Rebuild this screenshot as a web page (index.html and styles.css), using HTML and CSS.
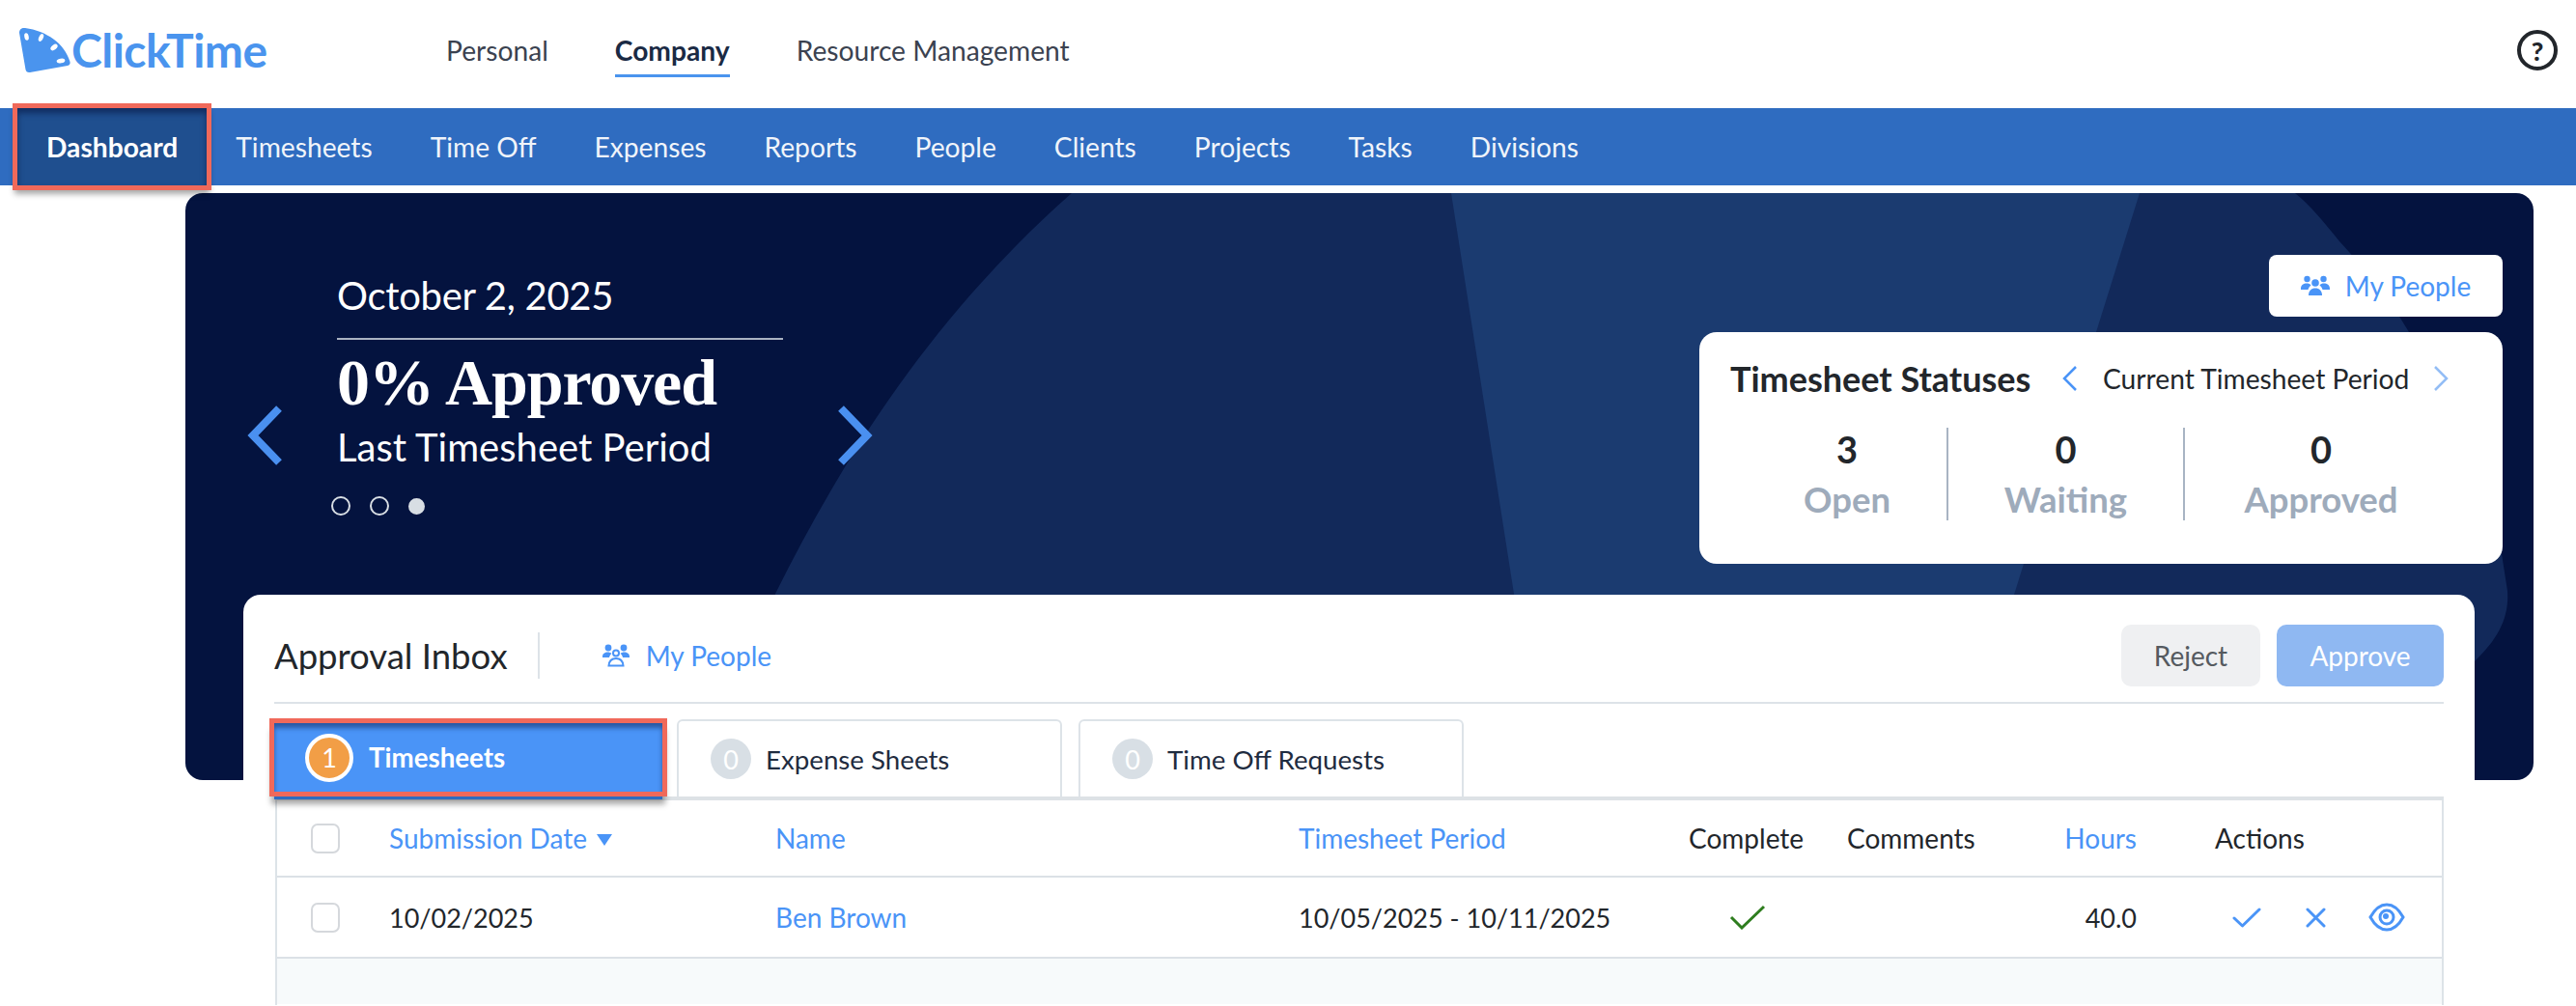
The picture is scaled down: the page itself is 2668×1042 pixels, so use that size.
FILE: index.html
```html
<!DOCTYPE html>
<html lang="en">
<head>
<meta charset="utf-8">
<title>ClickTime Dashboard</title>
<link rel="stylesheet" href="styles.css">
</head>
<body>
<header class="topbar">
  <a class="logo">
    <svg class="logo-mark" width="54" height="48" viewBox="0 0 54 48">
      <path d="M1 6C1 2.500 3.500 0.500 7 1C29 4 48 17 53.500 36C54 38 53 39.500 51 40L12 47C9.500 47.500 8 46 7.500 44L1 6Z" fill="#4a94ee"/>
      <ellipse cx="8.500" cy="10" rx="2.200" ry="3.800" transform="rotate(-12 8.500 10)" fill="#fff"/>
      <ellipse cx="23.500" cy="11" rx="2.200" ry="4.200" transform="rotate(25 23.500 11)" fill="#fff"/>
      <ellipse cx="37" cy="21" rx="2.400" ry="4.200" transform="rotate(52 37 21)" fill="#fff"/>
      <ellipse cx="44" cy="35" rx="2.400" ry="4.400" transform="rotate(80 44 35)" fill="#fff"/>
    </svg>
    <span class="logo-text">ClickTime</span>
  </a>
  <nav class="mainnav">
    <a class="mainnav-item">Personal</a>
    <a class="mainnav-item is-active">Company</a>
    <a class="mainnav-item">Resource Management</a>
  </nav>
  <span class="help">?</span>
</header>

<nav class="subnav">
  <a class="subnav-item is-active">Dashboard</a>
  <a class="subnav-item">Timesheets</a>
  <a class="subnav-item">Time Off</a>
  <a class="subnav-item">Expenses</a>
  <a class="subnav-item">Reports</a>
  <a class="subnav-item">People</a>
  <a class="subnav-item">Clients</a>
  <a class="subnav-item">Projects</a>
  <a class="subnav-item">Tasks</a>
  <a class="subnav-item">Divisions</a>
</nav>

<main class="content">
  <section class="hero">
    <svg class="hero-bg" viewBox="0 0 2432 608" width="2432" height="608" aria-hidden="true">
      <path d="M918 0C771 130 681 275 611 415C595 470 583 530 570 608L2200 608L2371 485C2395 462 2407 440 2405 412C2400 380 2396 350 2388 322C2360 240 2320 170 2288 120C2270 95 2250 70 2231 50C2215 30 2200 12 2185 0Z" fill="#12295a"/>
      <path d="M1311 0L1376 415L1390 608L1834 608L2024 0Z" fill="#1b3b70"/>
    </svg>
    <div class="carousel">
      <svg class="chevron" width="38" height="62" viewBox="0 0 38 62"><path d="M33 3L6 31L33 59" fill="none" stroke="#4a90f0" stroke-width="8"/></svg>
      <div class="slide">
        <div class="slide-date">October 2, 2025</div>
        <div class="slide-value">0% Approved</div>
        <div class="slide-label">Last Timesheet Period</div>
        <div class="dots"><span class="dot"></span><span class="dot"></span><span class="dot is-on"></span></div>
      </div>
      <svg class="chevron" width="38" height="62" viewBox="0 0 38 62"><path d="M5 3L32 31L5 59" fill="none" stroke="#4a90f0" stroke-width="8"/></svg>
    </div>
    <div class="hero-side">
      <a class="people-btn">
        <svg width="30" height="22" viewBox="0 0 30 22" fill="#4a94f7"><circle cx="6.500" cy="4" r="3.200"/><circle cx="23.500" cy="4" r="3.200"/><circle cx="15" cy="8" r="3.800"/><path d="M0 14C0 10 3 8.500 6 8.500C8 8.500 9.500 9 10.500 10.500C9 12 8 13 7.500 15H0Z"/><path d="M30 14C30 10 27 8.500 24 8.500C22 8.500 20.500 9 19.500 10.500C21 12 22 13 22.500 15H30Z"/><path d="M8 21C8 16 11 13.500 15 13.500C19 13.500 22 16 22 21Z"/></svg>
        My People
      </a>
      <div class="status-card">
        <div class="status-head">
          <span class="status-title">Timesheet Statuses</span>
          <svg class="status-chev" width="18" height="28" viewBox="0 0 18 28"><path d="M15 2L3 14L15 26" fill="none" stroke="#4a94f7" stroke-width="2.500"/></svg>
          <span class="status-period">Current Timesheet Period</span>
          <svg class="status-chev" width="18" height="28" viewBox="0 0 18 28"><path d="M3 2L15 14L3 26" fill="none" stroke="#93bdf5" stroke-width="2.500"/></svg>
        </div>
        <div class="status-cols">
          <div class="status-col is-open"><b>3</b><span>Open</span></div>
          <div class="status-col is-waiting"><b>0</b><span>Waiting</span></div>
          <div class="status-col is-approved"><b>0</b><span>Approved</span></div>
        </div>
      </div>
    </div>
  </section>

  <section class="inbox">
    <div class="inbox-head">
      <h2 class="inbox-title">Approval Inbox</h2>
      <a class="inbox-people">
        <svg width="28" height="24" viewBox="0 0 28 24" fill="none" stroke="#4a94f7" stroke-width="2"><circle cx="6" cy="4" r="3.400" fill="#4a94f7" stroke="none"/><circle cx="22" cy="4" r="3.400" fill="#4a94f7" stroke="none"/><path d="M0 13C0 10 2.500 8.500 5.500 8.500C7 8.500 8.500 9 9.500 10C8 11 7.500 12 7 14H0Z" fill="#4a94f7" stroke="none"/><path d="M28 13C28 10 25.500 8.500 22.500 8.500C21 8.500 19.500 9 18.500 10C20 11 20.500 12 21 14H28Z" fill="#4a94f7" stroke="none"/><circle cx="14" cy="9.500" r="3"/><path d="M6.500 22.500C7 17 10 15 14 15C18 15 21 17 21.500 22.500Z"/></svg>
        My People
      </a>
      <div class="inbox-actions">
        <button class="btn btn-reject">Reject</button>
        <button class="btn btn-approve">Approve</button>
      </div>
    </div>
    <div class="tabs">
      <a class="tab is-active"><span class="badge">1</span>Timesheets</a>
      <a class="tab"><span class="badge">0</span>Expense Sheets</a>
      <a class="tab"><span class="badge">0</span>Time Off Requests</a>
    </div>
    <div class="table">
      <div class="row row-head">
        <span class="check"></span>
        <span class="link">Submission Date <i class="caret"></i></span>
        <span class="link">Name</span>
        <span class="link">Timesheet Period</span>
        <span>Complete</span>
        <span>Comments</span>
        <span class="link num">Hours</span>
        <span class="cell-actions">Actions</span>
      </div>
      <div class="row">
        <span class="check"></span>
        <span class="digits">10/02/2025</span>
        <span class="link">Ben Brown</span>
        <span class="digits">10/05/2025 - 10/11/2025</span>
        <span class="cell-complete"><svg width="38" height="26" viewBox="0 0 38 26"><path d="M2 13L13 24L36 2" fill="none" stroke="#2e7d1e" stroke-width="3"/></svg></span>
        <span></span>
        <span class="num digits">40.0</span>
        <span class="cell-actions row-actions">
          <svg width="30" height="21" viewBox="0 0 30 21"><path d="M2 11L10.500 19L28 2" fill="none" stroke="#4a94f7" stroke-width="3" stroke-linecap="round" stroke-linejoin="round"/></svg>
          <svg width="21" height="21" viewBox="0 0 21 21"><path d="M2 2L19 19M19 2L2 19" fill="none" stroke="#4a94f7" stroke-width="3" stroke-linecap="round"/></svg>
          <svg width="38" height="30" viewBox="0 0 38 30"><path d="M2 15C7 6 12 2 19 2C26 2 31 6 36 15C31 24 26 28 19 28C12 28 7 24 2 15Z" fill="none" stroke="#4a94f7" stroke-width="3"/><circle cx="19" cy="15" r="7" fill="none" stroke="#4a94f7" stroke-width="3"/><circle cx="18" cy="14" r="3" fill="#4a94f7"/></svg>
        </span>
      </div>
      <div class="table-fill"></div>
    </div>
  </section>
</main>
</body>
</html>
```

FILE: styles.css
```css
* { box-sizing: border-box; }
html, body { margin: 0; height: 1042px; overflow: hidden; background: #fff; }
body { font-family: Lato, "Open Sans", sans-serif; font-size: 28px; color: #22262b; }
a { text-decoration: none; color: inherit; }

/* top bar */
.topbar { height: 112px; display: flex; align-items: center; padding: 0 19px; position: relative; }
.logo { display: flex; align-items: flex-start; width: 443px; height: 112px; padding-top: 28px; }
.logo-mark { display: block; }
.logo-text { font-size: 48px; line-height: 46px; font-weight: 700; color: #4a94ee; letter-spacing: -0.5px; margin-left: 1px; margin-top: 1px; }
.mainnav { display: flex; gap: 69px; height: 100%; align-items: center; }
.mainnav-item { font-size: 28.200px; color: #3b4250; height: 112px; line-height: 104px; position: relative; }
.mainnav-item.is-active { font-weight: 700; color: #1a2a44; }
.mainnav-item.is-active::after { content: ""; position: absolute; left: 0; right: 0; top: 77px; height: 3px; background: #4a94ee; }
.help { margin-left: auto; margin-bottom: 8px; width: 42px; height: 42px; border: 4px solid #22262b; border-radius: 50%; display: flex; align-items: center; justify-content: center; font-size: 27px; font-weight: 900; color: #22262b; }

/* sub nav */
.subnav { height: 80px; background: #2f6cc0; display: flex; padding-left: 18px; }
.subnav-item { padding: 0 30px; line-height: 80px; color: #f0f4fa; font-size: 28.200px; position: relative; }
.subnav-item.is-active { background: #1f4f8f; font-weight: 700; color: #fff; outline: 5px solid #f0695a; box-shadow: inset 0 5px 6px rgba(0, 10, 50, 0.5), 0 6px 6px 3px rgba(0, 0, 0, 0.35); z-index: 2; }

/* hero */
.content { padding: 8px 44px 0 192px; }
.hero { height: 608px; background: #04133f; border-radius: 18px; position: relative; overflow: hidden; display: flex; justify-content: space-between; padding: 0 32px 0 64px; }
.hero-bg { position: absolute; left: 0; top: 0; }
.carousel { display: flex; align-items: flex-start; gap: 55px; position: relative; }
.chevron { margin-top: 220px; flex: none; }
.slide { width: 462px; color: #fff; padding-top: 82px; }
.slide-date { font-size: 40px; line-height: 48px; padding-bottom: 20px; border-bottom: 2px solid #aab2c2; letter-spacing: -0.3px; }
.slide-value { font-family: "Liberation Serif", serif; font-weight: 700; font-size: 68px; line-height: 76px; margin-top: 6px; letter-spacing: -1.100px; }
.slide-label { font-size: 40px; line-height: 46px; margin-top: 6px; }
.dots { display: flex; align-items: center; gap: 20px; margin-top: 28px; margin-left: -6px; }
.dot { width: 20px; height: 20px; border: 2px solid #d8dee4; border-radius: 50%; }
.dot.is-on { width: 17px; height: 17px; background: #d8dee4; }

.hero-side { position: relative; padding-top: 64px; display: flex; flex-direction: column; align-items: flex-end; gap: 16px; }
.people-btn { width: 242px; height: 64px; background: #fff; border-radius: 8px; display: flex; align-items: center; justify-content: center; gap: 16px; color: #4a94f7; font-size: 28px; }
.status-card { width: 832px; height: 240px; background: #fff; border-radius: 18px; padding: 26px 32px; }
.status-head { display: flex; align-items: center; height: 44px; }
.status-title { font-size: 36px; font-weight: 700; color: #22262b; width: 343px; }
.status-period { font-size: 28.200px; margin: 0 24px 0 25px; }
.status-chev { flex: none; }
.status-cols { display: flex; margin-top: 29px; height: 96px; }
.status-col { display: flex; flex-direction: column; align-items: center; }
.status-col b { font-size: 38px; line-height: 44px; font-weight: 700; }
.status-col span { font-size: 36.500px; line-height: 44px; font-weight: 700; color: #9eabbb; margin-top: 8px; }
.status-col.is-open { width: 226px; padding-left: 18px; border-right: 2px solid #a8b4c3; }
.status-col.is-waiting { width: 245px; border-right: 2px solid #a8b4c3; }
.status-col.is-approved { width: 282px; }

/* inbox */
.inbox { position: relative; margin: -192px 61px 0 60px; background: #fff; border-radius: 18px 18px 0 0; padding: 32px 32px 0; height: 426px; }
.inbox-head { display: flex; align-items: center; height: 81px; border-bottom: 2px solid #dde3e8; padding-bottom: 17px; }
.inbox-title { margin: 0; font-size: 36.500px; font-weight: 400; color: #22262b; height: 48px; line-height: 48px; padding-right: 31px; border-right: 2px solid #dde3e8; }
.inbox-people { display: flex; align-items: center; gap: 17px; margin-left: 65px; color: #4a94f7; font-size: 28px; }
.inbox-actions { margin-left: auto; display: flex; gap: 17px; }
.btn { height: 64px; border: 0; border-radius: 10px; font-family: inherit; font-size: 28px; }
.btn-reject { width: 144px; background: #eff0f2; color: #555a60; }
.btn-approve { width: 173px; background: #8fb8f2; color: #fff; }

.tabs { display: flex; gap: 17px; height: 80px; margin-top: 16px; align-items: flex-end; }
.tab { width: 399px; height: 80px; border: 2px solid #dde3e8; border-bottom: 0; border-radius: 6px 6px 0 0; display: flex; align-items: center; padding-left: 33px; gap: 15px; color: #1f2c40; font-size: 27.700px; background: #fff; }
.tab .badge { width: 42px; height: 42px; border-radius: 50%; background: #d8dfe5; color: #fff; display: flex; align-items: center; justify-content: center; font-size: 27px; }
.tab.is-active { width: 402px; height: 71px; margin-bottom: 5px; margin-right: -2px; background: #4a94f7; color: #fff; font-weight: 700; border: 0; border-radius: 0; padding-left: 32px; gap: 16px; outline: 5px solid #f0695a; position: relative; z-index: 2; box-shadow: inset 0 5px 5px rgba(10, 30, 80, 0.5), 0 8px 0 0 #2f6cc0, 0 10px 6px 3px rgba(0, 0, 0, 0.35); }
.tab.is-active .badge { width: 50px; height: 50px; background: #f29e46; border: 4px solid #fff; font-weight: 400; }

.table { border-top: 4px solid #dde2e6; border-left: 2px solid #dde3e8; border-right: 2px solid #dde3e8; margin-left: 1px; height: 216px; }
.row { display: grid; grid-template-columns: 116px 400px 542px 404px 164px 151px 149px 1fr; height: 84px; align-items: center; border-bottom: 2px solid #dbe1e6; }
.row .check { width: 30px; height: 31px; border: 2px solid #d5d8dc; border-radius: 7px; margin-left: 35px; }
.row-head { height: 80px; }
.link { color: #4a94f7; }
.digits { font-size: 27px; }
.num { text-align: right; }
.caret { display: inline-block; width: 0; height: 0; border-left: 8px solid transparent; border-right: 8px solid transparent; border-top: 12px solid #4a94f7; margin-left: 3px; vertical-align: 3px; }
.cell-actions { padding-left: 81px; }
.row-actions { display: flex; align-items: center; padding-left: 99px; gap: 46px; }
.row-actions svg + svg + svg { margin-left: -2px; }
.cell-complete { padding-left: 42px; display: flex; }
.table-fill { height: 47px; background: #f7fafb; }
```
